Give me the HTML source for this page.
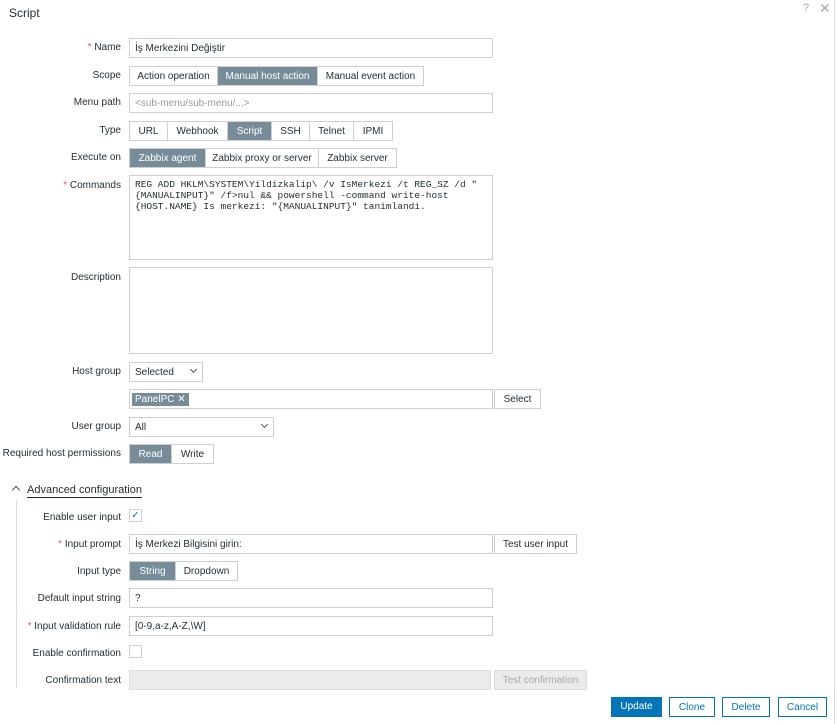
<!DOCTYPE html>
<html><head><meta charset="utf-8"><style>
*{box-sizing:border-box;margin:0;padding:0}
body{width:837px;height:724px;background:#fff;font-family:"Liberation Sans",Arial,sans-serif;font-size:10px;color:#1f2c33;position:relative;overflow:hidden}
.a{position:absolute}
.lbl{position:absolute;right:716px;text-align:right;white-space:nowrap;line-height:12px}
.req:before{content:"* ";color:#e45959}
.in{position:absolute;border:1px solid #cfcfcf;background:#fff;height:20px;line-height:19px;padding-left:5px;white-space:nowrap}
.seg{position:absolute;display:flex;height:20px;border:1px solid #cfcfcf}
.seg span{padding:0;text-align:center;line-height:19px;border-right:1px solid #cfcfcf;white-space:nowrap}
.seg span:last-child{border-right:none}
.seg .on{background:#768d99;color:#fff}
.btn{position:absolute;height:20px;border:1px solid #cfcfcf;background:#fff;text-align:center;line-height:19px}
.bb{position:absolute;height:20px;border:1px solid #0275b8;color:#0275b8;background:#fff;text-align:center;line-height:19px}
.chev{position:absolute;right:6px;top:4px;width:5px;height:5px;border-right:1px solid #555;border-bottom:1px solid #555;transform:rotate(45deg)}
</style></head><body>
<div class="a" style="left:9px;top:6px;font-size:12px;color:#1f2c33">Script</div>
<div class="a" style="left:803px;top:2px;color:#aaa;font-size:11px">?</div>
<div class="a" style="left:819px;top:0px;color:#aaa;font-size:14px">✕</div>
<div class="a" style="left:834px;top:0;width:1px;height:724px;background:#ddd"></div>

<div class="lbl req" style="top:42px">Name</div>
<div class="in" style="left:129px;top:38px;width:364px">İş Merkezini Değiştir</div>

<div class="lbl" style="top:70px">Scope</div>
<div class="seg" style="left:129px;top:66px"><span style="width:88px">Action operation</span><span class="on" style="width:100px">Manual host action</span><span style="width:105px">Manual event action</span></div>

<div class="lbl" style="top:97px">Menu path</div>
<div class="in" style="left:129px;top:93px;width:364px;color:#999">&lt;sub-menu/sub-menu/...&gt;</div>

<div class="lbl" style="top:125px">Type</div>
<div class="seg" style="left:129px;top:121px"><span style="width:38px">URL</span><span style="width:60px">Webhook</span><span class="on" style="width:44px">Script</span><span style="width:38px">SSH</span><span style="width:44px">Telnet</span><span style="width:38px">IPMI</span></div>

<div class="lbl" style="top:152px">Execute on</div>
<div class="seg" style="left:129px;top:148px"><span class="on" style="width:76px">Zabbix agent</span><span style="width:113px">Zabbix proxy or server</span><span style="width:77px">Zabbix server</span></div>

<div class="lbl req" style="top:180px">Commands</div>
<div class="in" style="left:129px;top:175px;width:364px;height:85px;white-space:pre;font-family:'Liberation Mono',monospace;font-size:9.5px;line-height:11px;padding-top:3px">REG ADD HKLM\SYSTEM\Yildizkalip\ /v IsMerkezi /t REG_SZ /d "
{MANUALINPUT}" /f&gt;nul &amp;&amp; powershell -command write-host
{HOST.NAME} Is merkezi: "{MANUALINPUT}" tanimlandi.</div>

<div class="lbl" style="top:272px">Description</div>
<div class="in" style="left:129px;top:267px;width:364px;height:87px"></div>

<div class="lbl" style="top:366px">Host group</div>
<div class="in" style="left:129px;top:362px;width:74px">Selected<div class="chev"></div></div>
<div class="in" style="left:129px;top:389px;width:364px;padding-left:2px"><span style="background:#768d99;color:#fff;padding:1px 3px;font-size:10px">PanelPC ✕</span></div>
<div class="btn" style="left:494px;top:389px;width:47px">Select</div>

<div class="lbl" style="top:421px">User group</div>
<div class="in" style="left:129px;top:417px;width:145px">All<div class="chev"></div></div>

<div class="lbl" style="top:448px">Required host permissions</div>
<div class="seg" style="left:129px;top:444px"><span class="on" style="width:42px">Read</span><span style="width:41px">Write</span></div>

<div class="a" style="left:13px;top:487px;width:6px;height:6px;border-left:1.5px solid #555;border-top:1.5px solid #555;transform:rotate(45deg)"></div>
<div class="a" style="left:27px;top:483px;font-size:11px;border-bottom:1px solid #1f2c33;line-height:14px">Advanced configuration</div>
<div class="a" style="left:16px;top:500px;width:1px;height:188px;background:#ddd"></div>

<div class="lbl" style="top:512px">Enable user input</div>
<div class="a" style="left:129px;top:509px;width:13px;height:13px;border:1px solid #cfcfcf;color:#0275b8;font-size:10px;line-height:11px;text-align:center">✓</div>

<div class="lbl req" style="top:539px">Input prompt</div>
<div class="in" style="left:129px;top:534px;width:364px">İş Merkezi Bilgisini girin:</div>
<div class="btn" style="left:494px;top:534px;width:83px">Test user input</div>

<div class="lbl" style="top:566px">Input type</div>
<div class="seg" style="left:129px;top:561px"><span class="on" style="width:46px">String</span><span style="width:61px">Dropdown</span></div>

<div class="lbl" style="top:593px">Default input string</div>
<div class="in" style="left:129px;top:588px;width:364px">?</div>

<div class="lbl req" style="top:621px">Input validation rule</div>
<div class="in" style="left:129px;top:616px;width:364px">[0-9,a-z,A-Z,\W]</div>

<div class="lbl" style="top:648px">Enable confirmation</div>
<div class="a" style="left:129px;top:645px;width:13px;height:13px;border:1px solid #cfcfcf"></div>

<div class="lbl" style="top:675px">Confirmation text</div>
<div class="in" style="left:129px;top:670px;width:362px;background:#ebebeb;border-color:#ddd"></div>
<div class="btn" style="left:494px;top:670px;width:93px;background:#ebebeb;color:#aaa;border-color:#ddd">Test confirmation</div>

<div class="a" style="left:611px;top:697px;width:51px;height:20px;background:#0275b8;color:#fff;text-align:center;line-height:20px">Update</div>
<div class="bb" style="left:669px;top:697px;width:46px">Clone</div>
<div class="bb" style="left:722px;top:697px;width:48px">Delete</div>
<div class="bb" style="left:778px;top:697px;width:49px">Cancel</div>
</body></html>
